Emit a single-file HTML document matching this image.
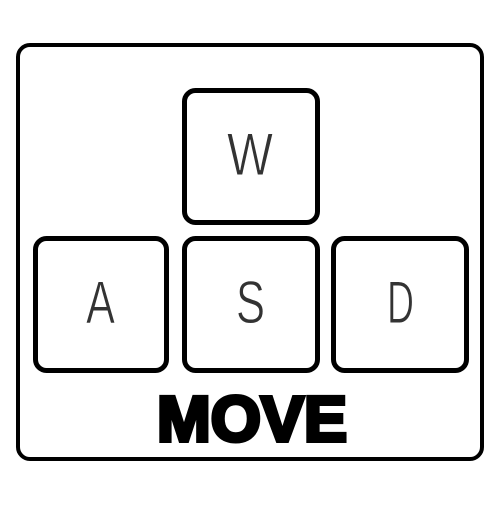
<!DOCTYPE html>
<html><head><style>
html,body{margin:0;padding:0;background:#fff;}
</style></head><body>
<svg width="500" height="500" xmlns="http://www.w3.org/2000/svg">
<rect x="18" y="45" width="464" height="414" rx="12" fill="#fff" stroke="#000" stroke-width="4"/>
<g fill="#fff" stroke="#000" stroke-width="5">
<rect x="184.5" y="90.5" width="133" height="132" rx="11"/>
<rect x="35.5" y="238.5" width="131" height="132" rx="11"/>
<rect x="184.5" y="238.5" width="133" height="132" rx="11"/>
<rect x="333.5" y="238.5" width="133" height="132" rx="11"/>
</g>
<g font-family="Liberation Sans, sans-serif" font-size="60" fill="#333" stroke="#fff" stroke-width="0.9">
<text x="227" y="175" textLength="46" lengthAdjust="spacingAndGlyphs">W</text>
<text x="86" y="323" textLength="29" lengthAdjust="spacingAndGlyphs">A</text>
<text x="236" y="323" textLength="29" lengthAdjust="spacingAndGlyphs">S</text>
<text x="387" y="323" textLength="27" lengthAdjust="spacingAndGlyphs">D</text>
</g>
<text x="252" y="441" font-family="Liberation Sans, sans-serif" font-weight="bold" font-size="64" text-anchor="middle" fill="#000" stroke="#000" stroke-width="4" textLength="190" lengthAdjust="spacingAndGlyphs">MOVE</text>
</svg>
</body></html>
